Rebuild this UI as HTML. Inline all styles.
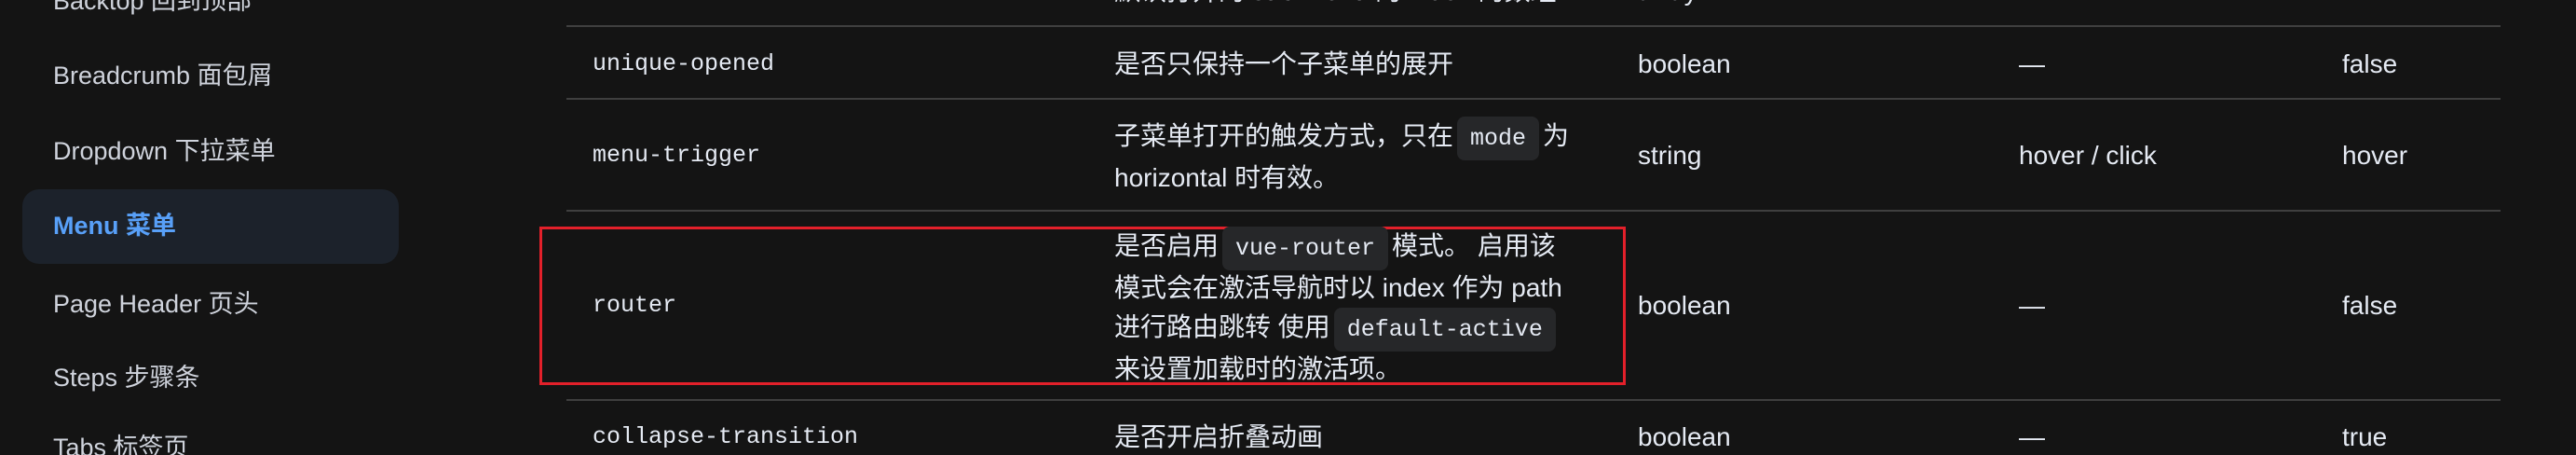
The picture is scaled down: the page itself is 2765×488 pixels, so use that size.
<!DOCTYPE html>
<html><head><meta charset="utf-8">
<style>
html,body{margin:0;padding:0;background:#141414;width:2765px;height:488px;overflow:hidden;position:relative;}
body{font-family:"Liberation Sans","Noto Sans CJK SC",sans-serif;color:#e5eaf3;}
.side{position:absolute;left:57px;font-size:27px;color:#cfd3dc;line-height:30px;white-space:nowrap;}
.active{position:absolute;left:24px;top:203px;width:404px;height:80px;background:#1c222b;border-radius:18px;}
.line{position:absolute;left:608px;width:2076px;height:2px;background:#3f3f3f;}
.t{position:absolute;font-size:28px;line-height:42px;white-space:nowrap;color:#e5eaf3;}
.m{position:absolute;font-family:"Liberation Mono",monospace;font-size:25px;line-height:30px;white-space:nowrap;color:#e5eaf3;}
code{font-family:"Liberation Mono",monospace;font-size:25px;background:#262729;border-radius:8px;padding:9px 14px;margin:0 4px;}
.red{position:absolute;left:579px;top:243px;width:1160px;height:164px;border:3px solid #e3202a;}
</style></head><body>
<div class="side" style="top:-14px">Backtop 回到顶部</div>
<div class="side" style="top:66px">Breadcrumb 面包屑</div>
<div class="side" style="top:147px">Dropdown 下拉菜单</div>
<div class="active"></div>
<div class="side" style="top:227px;color:#58a0f8;font-weight:600;">Menu 菜单</div>
<div class="side" style="top:311px">Page Header 页头</div>
<div class="side" style="top:390px">Steps 步骤条</div>
<div class="side" style="top:465px">Tabs 标签页</div>

<div class="t" style="left:1196px;top:-30px;">默认打开的 sub-menu 的 index 的数组</div>
<div class="t" style="left:1758px;top:-30px;">array</div>

<div class="line" style="top:27px"></div>
<div class="line" style="top:105px"></div>
<div class="line" style="top:225px"></div>
<div class="line" style="top:428px"></div>

<div class="m" style="left:636px;top:54px">unique-opened</div>
<div class="t" style="left:1196px;top:48px">是否只保持一个子菜单的展开</div>
<div class="t" style="left:1758px;top:48px">boolean</div>
<div class="t" style="left:2167px;top:48px">—</div>
<div class="t" style="left:2514px;top:48px">false</div>

<div class="m" style="left:636px;top:152px">menu-trigger</div>
<div class="t" style="left:1196px;top:125px">子菜单打开的触发方式，只在<code>mode</code>为<br>horizontal 时有效。</div>
<div class="t" style="left:1758px;top:146px">string</div>
<div class="t" style="left:2167px;top:146px">hover / click</div>
<div class="t" style="left:2514px;top:146px">hover</div>

<div class="red"></div>
<div class="m" style="left:636px;top:313px">router</div>
<div class="t" style="left:1196px;top:243px">是否启用<code>vue-router</code>模式。 启用该<br>模式会在激活导航时以 index 作为 path<br>进行路由跳转 使用<code>default-active</code><br>来设置加载时的激活项。</div>
<div class="t" style="left:1758px;top:307px">boolean</div>
<div class="t" style="left:2167px;top:307px">—</div>
<div class="t" style="left:2514px;top:307px">false</div>

<div class="m" style="left:636px;top:454px">collapse-transition</div>
<div class="t" style="left:1196px;top:448px">是否开启折叠动画</div>
<div class="t" style="left:1758px;top:448px">boolean</div>
<div class="t" style="left:2167px;top:448px">—</div>
<div class="t" style="left:2514px;top:448px">true</div>
</body></html>
